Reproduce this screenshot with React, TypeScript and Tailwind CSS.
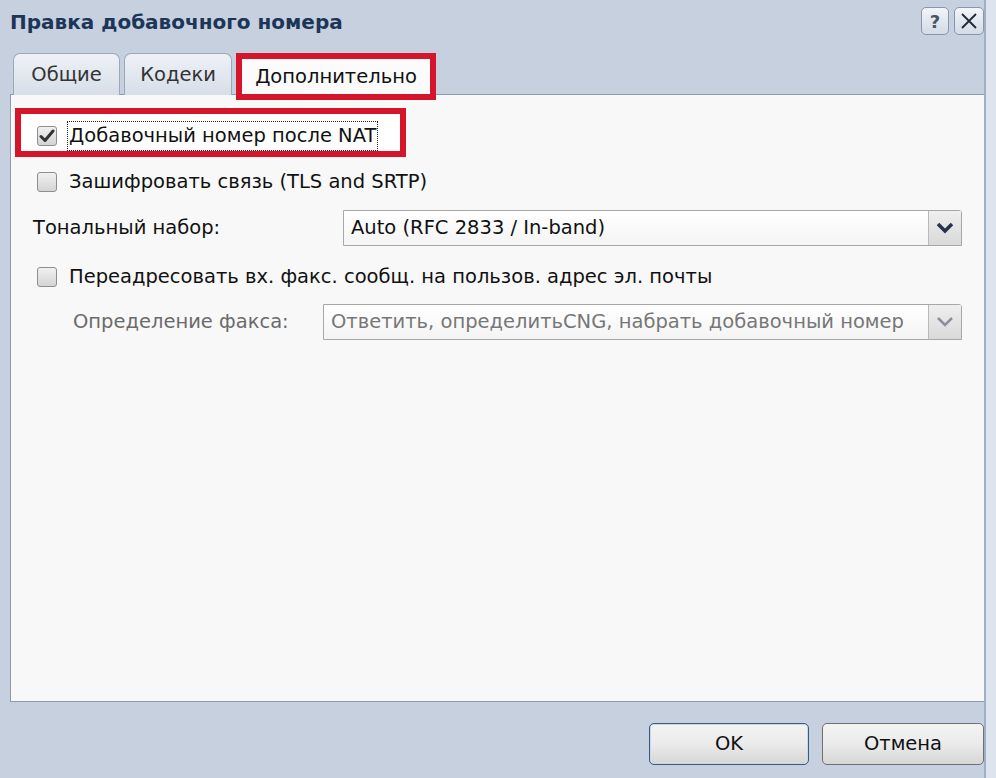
import React from "react";

const font = { fontFamily: '"DejaVu Sans", Verdana, sans-serif' };

function Checkbox({ checked }: { checked?: boolean }) {
  return (
    <span className="flex h-[20px] w-[20px] shrink-0 items-center justify-center rounded-[3px] border border-[#8e8e8e] bg-gradient-to-b from-[#f0f0f0] to-[#d4d4d4]">
      {checked && (
        <svg width="16" height="14" viewBox="0 0 16 14">
          <path d="M2 7.5 L6 11.5 L14 2" fill="none" stroke="#333" strokeWidth="3" strokeLinecap="round" strokeLinejoin="round" />
        </svg>
      )}
    </span>
  );
}

function Select({ value, disabled, className }: { value: string; disabled?: boolean; className: string }) {
  return (
    <div className={`flex h-[36px] items-stretch rounded-tr-[3px] border border-[#a7a7a7] bg-gradient-to-b from-white to-[#f4f4f4] ${className}`}>
      <div className={`flex flex-1 items-center pl-[7px] text-[19.5px] ${disabled ? "text-[#777]" : "text-[#111]"}`}>{value}</div>
      <div className="flex w-[33px] items-center justify-center border-l border-[#b9b9b9] bg-gradient-to-b from-[#efefef] to-[#d9d9d9]">
        <svg width="18" height="12" viewBox="0 0 18 12">
          <path d="M2 2 L9 9 L16 2" fill="none" stroke={disabled ? "#8a8fa0" : "#27324d"} strokeWidth={disabled ? 2.5 : 3.5} />
        </svg>
      </div>
    </div>
  );
}

export default function App() {
  return (
    <div className="flex h-[778px] w-[996px] overflow-hidden bg-[#dde4ee]" style={font}>
      <div className="flex w-[986px] flex-col border-r-2 border-[#9fb0c6] bg-[#c6d0df]">
        {/* title bar */}
        <div className="flex h-[53px] items-start justify-between pl-[10px]">
          <div className="mt-[7px] text-[20px] font-bold text-[#1d3557]">Правка добавочного номера</div>
          <div className="mt-[7px] flex gap-[5px]">
            <div className="flex h-[28px] w-[28px] items-center justify-center rounded-[5px] border border-[#8a96a8] bg-gradient-to-b from-[#f2f5f9] to-[#d3dbe6] text-[18px] font-bold text-[#4b5563]">?</div>
            <div className="flex h-[28px] w-[30px] items-center justify-center rounded-[5px] border border-[#8a96a8] bg-gradient-to-b from-[#f2f5f9] to-[#d3dbe6]">
              <svg width="18" height="18" viewBox="0 0 18 18">
                <path d="M2 2 L16 16 M16 2 L2 16" stroke="#1f2937" strokeWidth="1.8" />
              </svg>
            </div>
          </div>
        </div>

        {/* tabs */}
        <div className="relative z-10 flex h-[41px] items-start gap-[4px] pl-[13px]">
          <div className="flex h-[42px] w-[107px] items-center justify-center rounded-t-[7px] border border-b-0 border-[#9ca8b8] bg-gradient-to-b from-[#eef2f7] to-[#d7dee8] text-[19.5px] text-[#333]">Общие</div>
          <div className="flex h-[42px] w-[108px] items-center justify-center rounded-t-[7px] border border-b-0 border-[#9ca8b8] bg-gradient-to-b from-[#eef2f7] to-[#d7dee8] text-[19.5px] text-[#333]">Кодеки</div>
          <div className="flex h-[47px] w-[200px] items-center justify-center border-[6px] border-[#d5152a] bg-[#fbfbfb] text-[19.5px] text-[#111]">Дополнительно</div>
        </div>

        {/* panel */}
        <div className="ml-[10px] flex h-[608px] flex-col border border-r-0 border-[#8d9bb0] bg-[#f8f8f8] pr-[22px] text-[19.5px] leading-[24px]">
          <div className="ml-[4px] mt-[13px] flex h-[49px] w-[391px] items-center border-[6px] border-[#d5152a] bg-white pl-[16px] pt-[6px]">
            <Checkbox checked />
            <span className="ml-[10px] border border-dotted border-[#222] px-[1px] leading-[28px] text-[#111]">Добавочный номер после NAT</span>
          </div>
          <div className="ml-[26px] mt-[13px] flex items-center gap-[12px]">
            <Checkbox />
            <span className="text-[#111]">Зашифровать связь (TLS and SRTP)</span>
          </div>
          <div className="ml-[22px] mt-[16px] flex items-center">
            <span className="w-[310px] text-[#111]">Тональный набор:</span>
            <Select value="Auto (RFC 2833 / In-band)" className="flex-1" />
          </div>
          <div className="ml-[26px] mt-[19px] flex items-center gap-[12px]">
            <Checkbox />
            <span className="text-[#111]">Переадресовать вх. факс. сообщ. на пользов. адрес эл. почты</span>
          </div>
          <div className="ml-[62px] mt-[15px] flex items-center">
            <span className="w-[250px] text-[#6b6b6b]">Определение факса:</span>
            <Select value="Ответить, определитьCNG, набрать добавочный номер" disabled className="flex-1" />
          </div>
        </div>

        {/* footer */}
        <div className="flex flex-1 items-start justify-end gap-[13px] pt-[21px]">
          <button className="h-[42px] w-[160px] rounded-[5px] border border-[#3a5a80] bg-gradient-to-b from-[#f3f3f3] via-[#ebebeb] to-[#d6d6d6] text-[19.5px] text-[#111] shadow-[inset_0_0_0_1px_#c5d8ee]">OK</button>
          <button className="h-[42px] w-[162px] rounded-[5px] border border-[#707070] bg-gradient-to-b from-[#f3f3f3] via-[#ebebeb] to-[#d6d6d6] text-[19.5px] text-[#111]">Отмена</button>
        </div>
      </div>
    </div>
  );
}
